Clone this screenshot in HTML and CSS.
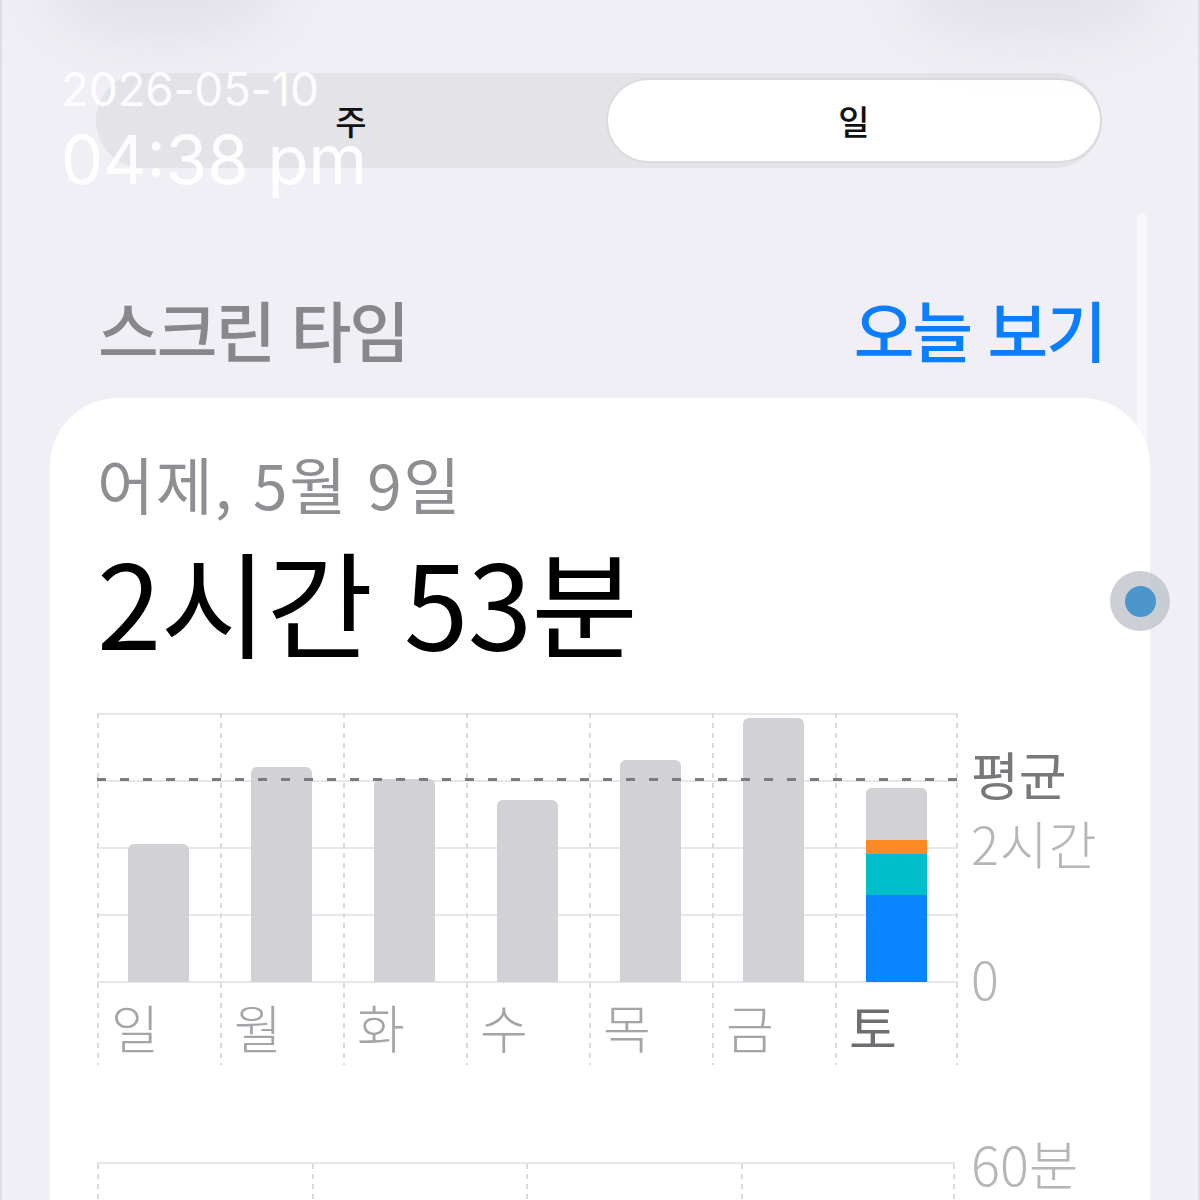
FILE: index.html
```html
<!DOCTYPE html>
<html lang="ko">
<head>
<meta charset="utf-8">
<title>스크린 타임</title>
<link rel="stylesheet" href="styles.css">
</head>
<body>
<div class="screen">
  <div class="blob blob-left"></div>
  <div class="blob blob-right"></div>

  <div class="stamp">
    <div class="stamp-date">2026-05-10</div>
    <div class="stamp-time">04:38 pm</div>
  </div>

  <div class="segmented">
    <div class="seg">주</div>
    <div class="seg seg-active">일</div>
  </div>

  <div class="scroll-track"></div>

  <div class="header">
    <h1 class="title">스크린 타임</h1>
    <a class="link">오늘 보기</a>
  </div>

  <section class="card">
    <div class="date">어제, 5월 9일</div>
    <div class="total">2시간 53분</div>

    <div class="chart">
      <div class="week">
        <div class="day"><div class="slot"><div class="bar" style="height:138px"></div></div><div class="label">일</div></div>
        <div class="day"><div class="slot"><div class="bar" style="height:215px"></div></div><div class="label">월</div></div>
        <div class="day"><div class="slot"><div class="bar" style="height:203px"></div></div><div class="label">화</div></div>
        <div class="day"><div class="slot"><div class="bar" style="height:182px"></div></div><div class="label">수</div></div>
        <div class="day"><div class="slot"><div class="bar" style="height:222px"></div></div><div class="label">목</div></div>
        <div class="day"><div class="slot"><div class="bar" style="height:264px"></div></div><div class="label">금</div></div>
        <div class="day"><div class="slot">
          <div class="bar bar-stack">
            <div class="seg-gray" style="height:52px"></div>
            <div class="seg-orange" style="height:14px"></div>
            <div class="seg-teal" style="height:41px"></div>
            <div class="seg-blue" style="height:87px"></div>
          </div></div><div class="label label-current">토</div></div>
        <div class="avg"></div>
      </div>
      <div class="axis">
        <span class="axis-avg">평균</span>
        <span class="axis-mid">2시간</span>
        <span class="axis-zero">0</span>
      </div>
    </div>

    <div class="hours">
      <div class="hgrid">
        <div class="hcol"></div>
        <div class="hcol"></div>
        <div class="hcol"></div>
        <div class="hcol"></div>
      </div>
      <div class="hours-label">60분</div>
    </div>
  </section>

  <div class="knob"><div class="knob-dot"></div></div>
</div>
</body>
</html>
```

FILE: styles.css
```css
* { box-sizing: border-box; margin: 0; padding: 0; }

html, body {
  width: 1200px;
  height: 1200px;
  overflow: hidden;
}

body {
  background: #f0eff5;
  font-family: "Noto Sans CJK KR", "Noto Sans", sans-serif;
}

.screen {
  position: relative;
  height: 1200px;
  border-left: 2px solid #dddde2;
  border-right: 2px solid #dddde2;
  padding: 73px 48px 0 48px;
  overflow: hidden;
}

.blob {
  position: absolute;
  border-radius: 50%;
  background: rgba(205, 205, 214, 0.4);
  filter: blur(30px);
}
.blob-left { left: 40px; top: -70px; width: 240px; height: 110px; }
.blob-right { left: 900px; top: -60px; width: 260px; height: 100px; }

.stamp {
  position: absolute;
  left: 59px;
  top: 66px;
  z-index: 5;
  display: flex;
  flex-direction: column;
  gap: 14px;
  font-family: "Inter", "Liberation Sans", sans-serif;
  color: rgba(255, 255, 255, 0.92);
}
.stamp-date { font-size: 46px; line-height: 46px; letter-spacing: -0.3px; }
.stamp-time { font-size: 67px; line-height: 67px; }

.segmented {
  margin: 0 48px 0 46px;
  height: 95px;
  border-radius: 48px;
  background: #e3e3e8;
  display: grid;
  grid-template-columns: 510px 1fr;
  padding: 5px 0;
}
.seg {
  display: flex;
  align-items: center;
  justify-content: center;
  font-size: 34px;
  font-weight: 500;
  color: #111;
  border-radius: 43px;
}
.seg-active {
  background: #fff;
  border: 2px solid #dadadf;
}

.scroll-track {
  position: absolute;
  left: 1135px;
  top: 213px;
  width: 10px;
  height: 400px;
  border-radius: 5px;
  background: #f8f8fb;
}

.header {
  margin-top: 120px;
  height: 80px;
  display: flex;
  justify-content: space-between;
  align-items: center;
  padding: 0 45px 0 48px;
}
.title {
  font-size: 66px;
  line-height: 80px;
  font-weight: 500;
  color: #87878c;
  letter-spacing: -2px;
}
.link {
  font-size: 66px;
  line-height: 80px;
  font-weight: 500;
  color: #0b7dff;
  letter-spacing: -2px;
}

.card {
  position: relative;
  z-index: 1;
  margin-top: 30px;
  background: #fff;
  border-radius: 68px 68px 0 0;
  padding: 49px 50px 0 47px;
  height: 900px;
}

.date {
  font-size: 62px;
  line-height: 72px;
  color: #8e8e93;
  letter-spacing: 1.8px;
}
.total {
  margin-top: 15px;
  font-size: 116px;
  line-height: 130px;
  font-weight: 400;
  color: #000;
  letter-spacing: -0.8px;
}

.chart {
  margin-top: 49px;
  display: flex;
}
.week {
  position: relative;
  width: 861px;
  height: 352px;
  display: grid;
  grid-template-columns: repeat(7, 1fr);
  background: repeating-linear-gradient(to bottom, #e6e6eb 0 2px, transparent 2px 67px) 0 0 / 100% 271px no-repeat;
}
.day {
  display: flex;
  flex-direction: column;
  background: repeating-linear-gradient(to bottom, #d9d9de 0 5px, transparent 5px 10px) 0 0 / 2px 100% no-repeat;
}
.day:nth-child(7) {
  background:
    repeating-linear-gradient(to bottom, #d9d9de 0 5px, transparent 5px 10px) 0 0 / 2px 100% no-repeat,
    repeating-linear-gradient(to bottom, #d9d9de 0 5px, transparent 5px 10px) 100% 0 / 2px 100% no-repeat;
}
.slot {
  height: 269px;
  display: flex;
  align-items: flex-end;
  justify-content: center;
}
.bar {
  width: 61px;
  background: #d1d1d6;
  border-radius: 6px 6px 0 0;
}
.bar-stack {
  display: flex;
  flex-direction: column;
  overflow: hidden;
}
.seg-gray { background: #d1d1d6; }
.seg-orange { background: #fd8a23; }
.seg-teal { background: #00bfcb; }
.seg-blue { background: #0a84ff; }

.label {
  padding: 15px 0 0 14px;
  font-size: 52px;
  line-height: 60px;
  font-weight: 300;
  color: #a4a4a9;
}
.label-current { color: #6d6d72; font-weight: 400; }

.avg {
  position: absolute;
  left: 0;
  right: 0;
  top: 65px;
  height: 3px;
  background: repeating-linear-gradient(to right, #7a7a7f 0 9px, transparent 9px 23px);
}

.axis {
  position: relative;
  flex: 1;
  margin-left: 13px;
}
.axis span {
  position: absolute;
  left: 0;
  font-size: 52px;
  line-height: 50px;
  white-space: nowrap;
}
.axis-avg { top: 36px; color: #77777c; }
.axis-mid { top: 105px; color: #b5b5ba; font-weight: 300; letter-spacing: 1px; }
.axis-zero { top: 240px; color: #b5b5ba; font-weight: 300; }

.hours {
  margin-top: 75px;
  display: flex;
}
.hgrid {
  margin-top: 22px;
  width: 858px;
  height: 60px;
  border-top: 2px solid #e6e6eb;
  display: grid;
  grid-template-columns: repeat(4, 1fr);
}
.hcol {
  background: repeating-linear-gradient(to bottom, #d9d9de 0 5px, transparent 5px 10px) 0 0 / 2px 100% no-repeat;
}
.hcol:last-child {
  background:
    repeating-linear-gradient(to bottom, #d9d9de 0 5px, transparent 5px 10px) 0 0 / 2px 100% no-repeat,
    repeating-linear-gradient(to bottom, #d9d9de 0 5px, transparent 5px 10px) 100% 0 / 2px 100% no-repeat;
}
.hours-label {
  margin-left: 16px;
  font-size: 54px;
  line-height: 46px;
  font-weight: 300;
  color: #b5b5ba;
}

.knob {
  position: absolute;
  left: 1108px;
  top: 571px;
  z-index: 3;
  width: 60px;
  height: 60px;
  border-radius: 50%;
  background: rgba(184, 190, 198, 0.72);
  display: flex;
  align-items: center;
  justify-content: center;
}
.knob-dot {
  width: 31px;
  height: 31px;
  border-radius: 50%;
  background: #4b97cd;
}
```
